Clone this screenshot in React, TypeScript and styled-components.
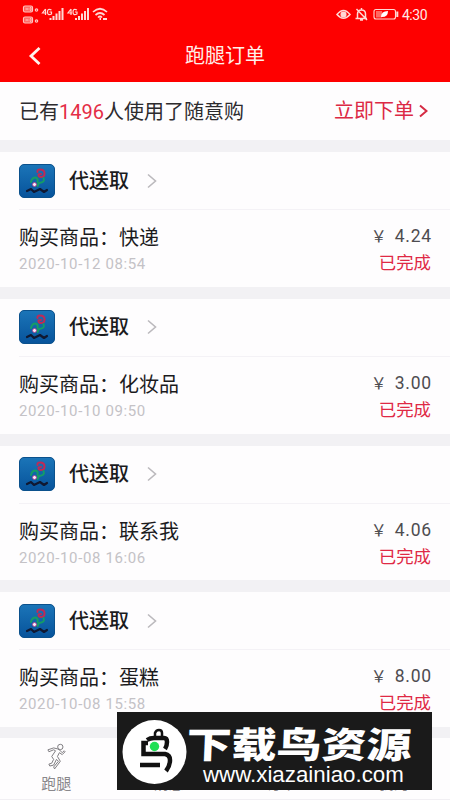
import React from "react";
import styled, { createGlobalStyle } from "styled-components";

const GlobalStyle = createGlobalStyle`
  * { box-sizing: border-box; }
  body {
    margin: 0;
    background: #fefdfe;
    font-family: Roboto, "Noto Sans CJK SC", sans-serif;
  }
`;

const Screen = styled.div`
  position: relative;
  display: flex;
  flex-direction: column;
  width: 450px;
  height: 800px;
  overflow: hidden;
  background: #fefdfe;
`;

const Header = styled.header`
  flex: none;
  height: 82px;
  background: #fe0000;
  color: #fff;
`;

const StatusBar = styled.div`
  display: flex;
  justify-content: space-between;
  height: 28px;
  padding: 0 23px 0 22px;
`;

const StatusRight = styled.div`
  display: flex;
  align-items: center;
  height: 30px;
`;

const Clock = styled.span`
  font-size: 14px;
  line-height: 30px;
  color: #ffe9e6;
  margin-left: 3px;
  width: 25px;
  letter-spacing: -0.5px;
  white-space: nowrap;
`;

const TitleBar = styled.div`
  display: grid;
  grid-template-columns: 45px 1fr 45px;
  align-items: center;
  height: 56px;
`;

const BackIcon = styled.svg`
  width: 14px;
  height: 20px;
  margin-left: 28px;
`;

const Title = styled.h1`
  margin: 0;
  font-size: 20px;
  line-height: 56px;
  font-weight: 400;
  text-align: center;
  color: #fff0ea;
`;

const Promo = styled.section`
  flex: none;
  display: flex;
  justify-content: space-between;
  height: 58px;
  padding: 0 22px 0 19px;
  font-size: 20px;
  line-height: 60px;
  color: #2d2b2e;
`;

const Count = styled.span`
  color: #e42d46;
`;

const OrderLink = styled.div`
  display: flex;
  align-items: center;
  color: #dc2945;

  svg {
    margin-left: 5px;
  }
`;

const List = styled.main`
  flex: none;
  display: grid;
  grid-template-rows: repeat(4, 146.8px);
  height: 598px;
  background: #f2f1f4;
  overflow: hidden;
`;

const Card = styled.article`
  margin-top: 12px;
  background: #fefdfe;
`;

const CardHead = styled.div`
  display: flex;
  align-items: center;
  height: 58px;
  margin-left: 19px;
  border-bottom: 1px solid #f4f2f6;
`;

const CardTitle = styled.h2`
  margin: 0 18px 0 14px;
  font-size: 20px;
  line-height: 58px;
  font-weight: 500;
  color: #1b1b1d;
`;

const CardBody = styled.div`
  display: grid;
  grid-template-columns: 1fr auto;
  grid-template-rows: 28px 24px;
  padding: 12px 19px 0;
`;

const Product = styled.div`
  font-size: 20px;
  line-height: 32px;
  color: #1b1b1d;
`;

const Price = styled.div`
  font-size: 17.5px;
  line-height: 27px;
  letter-spacing: 0.8px;
  color: #4e4c50;
  text-align: right;
  margin-right: -1px;
`;

const Yen = styled.span`
  font-family: "Noto Sans CJK SC", sans-serif;
  font-size: 16px;
  margin-right: 7px;
`;

const Time = styled.time`
  font-size: 15px;
  line-height: 29px;
  letter-spacing: 0.63px;
  color: #c4c2c6;
`;

const Status = styled.div`
  font-size: 17.4px;
  line-height: 27px;
  color: #df2945;
  text-align: right;
`;

const TabBar = styled.nav`
  flex: none;
  display: grid;
  grid-template-columns: repeat(4, 1fr);
  height: 62px;
  border-bottom: 1px solid #f1eff3;
`;

const Tab = styled.div`
  display: flex;
  flex-direction: column;
  align-items: center;
  padding-top: 5px;
  font-size: 15px;
  line-height: 22px;
  color: #8a888c;
`;

const TabIcon = styled.svg`
  width: 21px;
  height: 27px;
  margin-bottom: 3px;
`;

const Watermark = styled.aside`
  position: absolute;
  left: 117px;
  top: 712px;
  width: 315px;
  height: 78px;
  display: flex;
  background: #1a1a1a;
  color: #fff;
`;

const Brand = styled.svg`
  flex: none;
  width: 65px;
  height: 66px;
  margin: 7px 0 0 5px;
`;

const BrandText = styled.div`
  display: flex;
  flex-direction: column;
  align-items: flex-start;
`;

const BrandName = styled.div`
  height: 50px;
  font-family: "Noto Sans CJK SC", sans-serif;
  font-size: 36px;
  line-height: 61px;
  font-weight: 900;
  white-space: nowrap;
  transform: scaleX(1.25) skewX(-2deg);
  transform-origin: 0 50%;
`;

const Url = styled.div`
  margin-left: 16px;
  font-family: "Liberation Sans", sans-serif;
  font-size: 22.3px;
  line-height: 26px;
  white-space: nowrap;
`;

function Signal() {
  return (
    <g fill="none" stroke="#ffd9d5">
      <path d="M3 0L0 4H4M3 0V6M9 1Q5-1 5 3T9 5V3H7" strokeWidth="1.2" />
      <path d="M8 11V9M11 11V7M14 11V4.5M17 11V2M20 11V-1" strokeWidth="2" />
    </g>
  );
}

function StatusLeft() {
  return (
    <svg width="88" height="28" viewBox="22 0 88 28">
      <g fill="none" stroke="#ffc5c0" strokeWidth="1.2">
        {[6, 17].map((y) => (
          <g key={y}>
            <rect x="23.5" y={y} width="9" height="6" rx="1.5" fill="#ff5a55" />
            <path d={`M26 ${y + 1.5}v3M28 ${y + 1.5}v3M26 ${y + 3}h2M30 ${y + 1.5}v3h1v-3z`} strokeWidth=".8" />
            <circle cx="36.5" cy={y + 4} r="1.2" />
          </g>
        ))}
      </g>
      <g transform="translate(42.5 9)"><Signal /></g>
      <g transform="translate(68 9)"><Signal /></g>
      <g fill="none" stroke="#ffd9d5" strokeWidth="1.7">
        <path d="M93 12Q100 5.500 107 12M95.500 15Q100 11 104.500 15M98 17.500Q100 15.500 102 17.500" />
        <path d="M99.500 19H101M103 19H107" strokeWidth="2" />
      </g>
    </svg>
  );
}

function StatusIcons() {
  return (
    <svg width="63" height="30" viewBox="336 0 63 30" fill="none" stroke="#ffd9d5" strokeWidth="1.5">
      <path d="M337 14.500Q343.500 6.500 350 14.500Q343.500 22 337 14.500Z" />
      <circle cx="343.500" cy="14.500" r="2.300" fill="#ffd9d5" />
      <path d="M357.500 18V14Q357.500 10 361.500 10T365.500 14V18M355.500 18.500H367M361.500 8V10M360 20H363M356.500 9L367 20" />
      <rect x="374" y="9.500" width="21.500" height="9.500" rx="2" strokeWidth="1.100" />
      <path d="M376 11H382V17.500H376Z" fill="#ff6762" stroke="none" />
      <path d="M381 17Q381 11 388 11Q388 17 382 17Z" fill="#fff" stroke="none" />
      <path d="M397.300 11.500V17" strokeWidth="2" />
    </svg>
  );
}

function AppIcon() {
  return (
    <svg width="36" height="34" viewBox="0 0 36 34">
      <defs>
        <linearGradient id="tile" x2="0" y2="1">
          <stop stopColor="#1b75b8" />
          <stop offset="1" stopColor="#07539b" />
        </linearGradient>
      </defs>
      <rect x=".5" y=".5" width="35" height="33" rx="4.500" fill="url(#tile)" stroke="#0b518c" />
      <g fill="none" strokeLinecap="round" strokeLinejoin="round">
        <path d="M18.500 8Q18 5.500 21 5.500Q25.500 5.500 25.500 9.500Q25.500 13 22 13Q19 13 19.500 10.500L22 10" stroke="#c02a55" strokeWidth="2" />
        <path d="M24.500 14Q26 18 22 18.500Q19 18.500 18.500 22M12 18Q13 13.500 16.500 13.500Q19.500 14.500 18.500 18" stroke="#159c66" strokeWidth="2" />
        <path d="M8 27L12 25L15 28L21 25L25 28L28 26" stroke="#101831" strokeWidth="2.200" />
      </g>
      <circle cx="15.500" cy="20.500" r="2" fill="#f5eaf8" stroke="#b13987" strokeWidth=".8" />
    </svg>
  );
}

function Runner() {
  return (
    <TabIcon viewBox="0 0 22 28" fill="none" stroke="#7b797d" strokeWidth="1">
      <circle cx="15" cy="4" r="2.800" />
      <path d="M12 6L8 5L2 7L3 9L8 7L10 8L6 14L8 17L6 21L3 22L4 24L8 23L11 17L13 19L8 25L9 27L15 19L12 14L14 10L17 12L20 9L19 8L17 10L14 7Z" />
    </TabIcon>
  );
}

const orders = [
  { product: "快递", time: "2020-10-12 08:54", price: "4.24" },
  { product: "化妆品", time: "2020-10-10 09:50", price: "3.00" },
  { product: "联系我", time: "2020-10-08 16:06", price: "4.06" },
  { product: "蛋糕", time: "2020-10-08 15:58", price: "8.00" },
];

export default function App() {
  return (
    <>
      <GlobalStyle />
      <Screen>
        <Header>
          <StatusBar>
            <StatusLeft />
            <StatusRight>
              <StatusIcons />
              <Clock>4:30</Clock>
            </StatusRight>
          </StatusBar>
          <TitleBar>
            <BackIcon viewBox="0 0 14 20">
              <path d="M11.500 2L3 10L11.500 18" fill="none" stroke="#fff2ee" strokeWidth="2.800" />
            </BackIcon>
            <Title>跑腿订单</Title>
          </TitleBar>
        </Header>
        <Promo>
          <div>已有<Count>1496</Count>人使用了随意购</div>
          <OrderLink>
            立即下单
            <svg width="9" height="14" viewBox="0 0 9 14">
              <path d="M1 1.500L7.500 7L1 12.500" fill="none" stroke="#d52b43" strokeWidth="2" />
            </svg>
          </OrderLink>
        </Promo>
        <List>
          {orders.map((order) => (
            <Card key={order.time}>
              <CardHead>
                <AppIcon />
                <CardTitle>代送取</CardTitle>
                <svg width="10" height="16" viewBox="0 0 10 16">
                  <path d="M1 1.500L8.500 8L1 14.500" fill="none" stroke="#bbb9bd" strokeWidth="1.600" />
                </svg>
              </CardHead>
              <CardBody>
                <Product>购买商品：{order.product}</Product>
                <Price><Yen>￥</Yen>{order.price}</Price>
                <Time>{order.time}</Time>
                <Status>已完成</Status>
              </CardBody>
            </Card>
          ))}
        </List>
        <TabBar>
          <Tab><Runner />跑腿</Tab>
          <Tab><TabIcon />消息</Tab>
          <Tab><TabIcon />订单</Tab>
          <Tab><TabIcon />我的</Tab>
        </TabBar>
        <Watermark>
          <Brand viewBox="0 0 65 66">
            <circle cx="32.500" cy="33" r="32" fill="#fff" />
            <g fill="none" stroke="#111" strokeWidth="4.500">
              <path d="M25 21Q28 19 32 19H42Q45 19 45 23T43 30" />
              <path d="M26 24H21.500V35H43Q48 36 48 41Q48 47 44 52" />
              <path d="M18 46H38" />
              <path d="M33 19V14Q34 11 37 11T40 14V18" strokeWidth="2.500" />
            </g>
            <circle cx="32.500" cy="27.500" r="4.700" fill="#20df55" />
          </Brand>
          <BrandText>
            <BrandName>下载鸟资源</BrandName>
            <Url>www.xiazainiao.com</Url>
          </BrandText>
        </Watermark>
      </Screen>
    </>
  );
}
